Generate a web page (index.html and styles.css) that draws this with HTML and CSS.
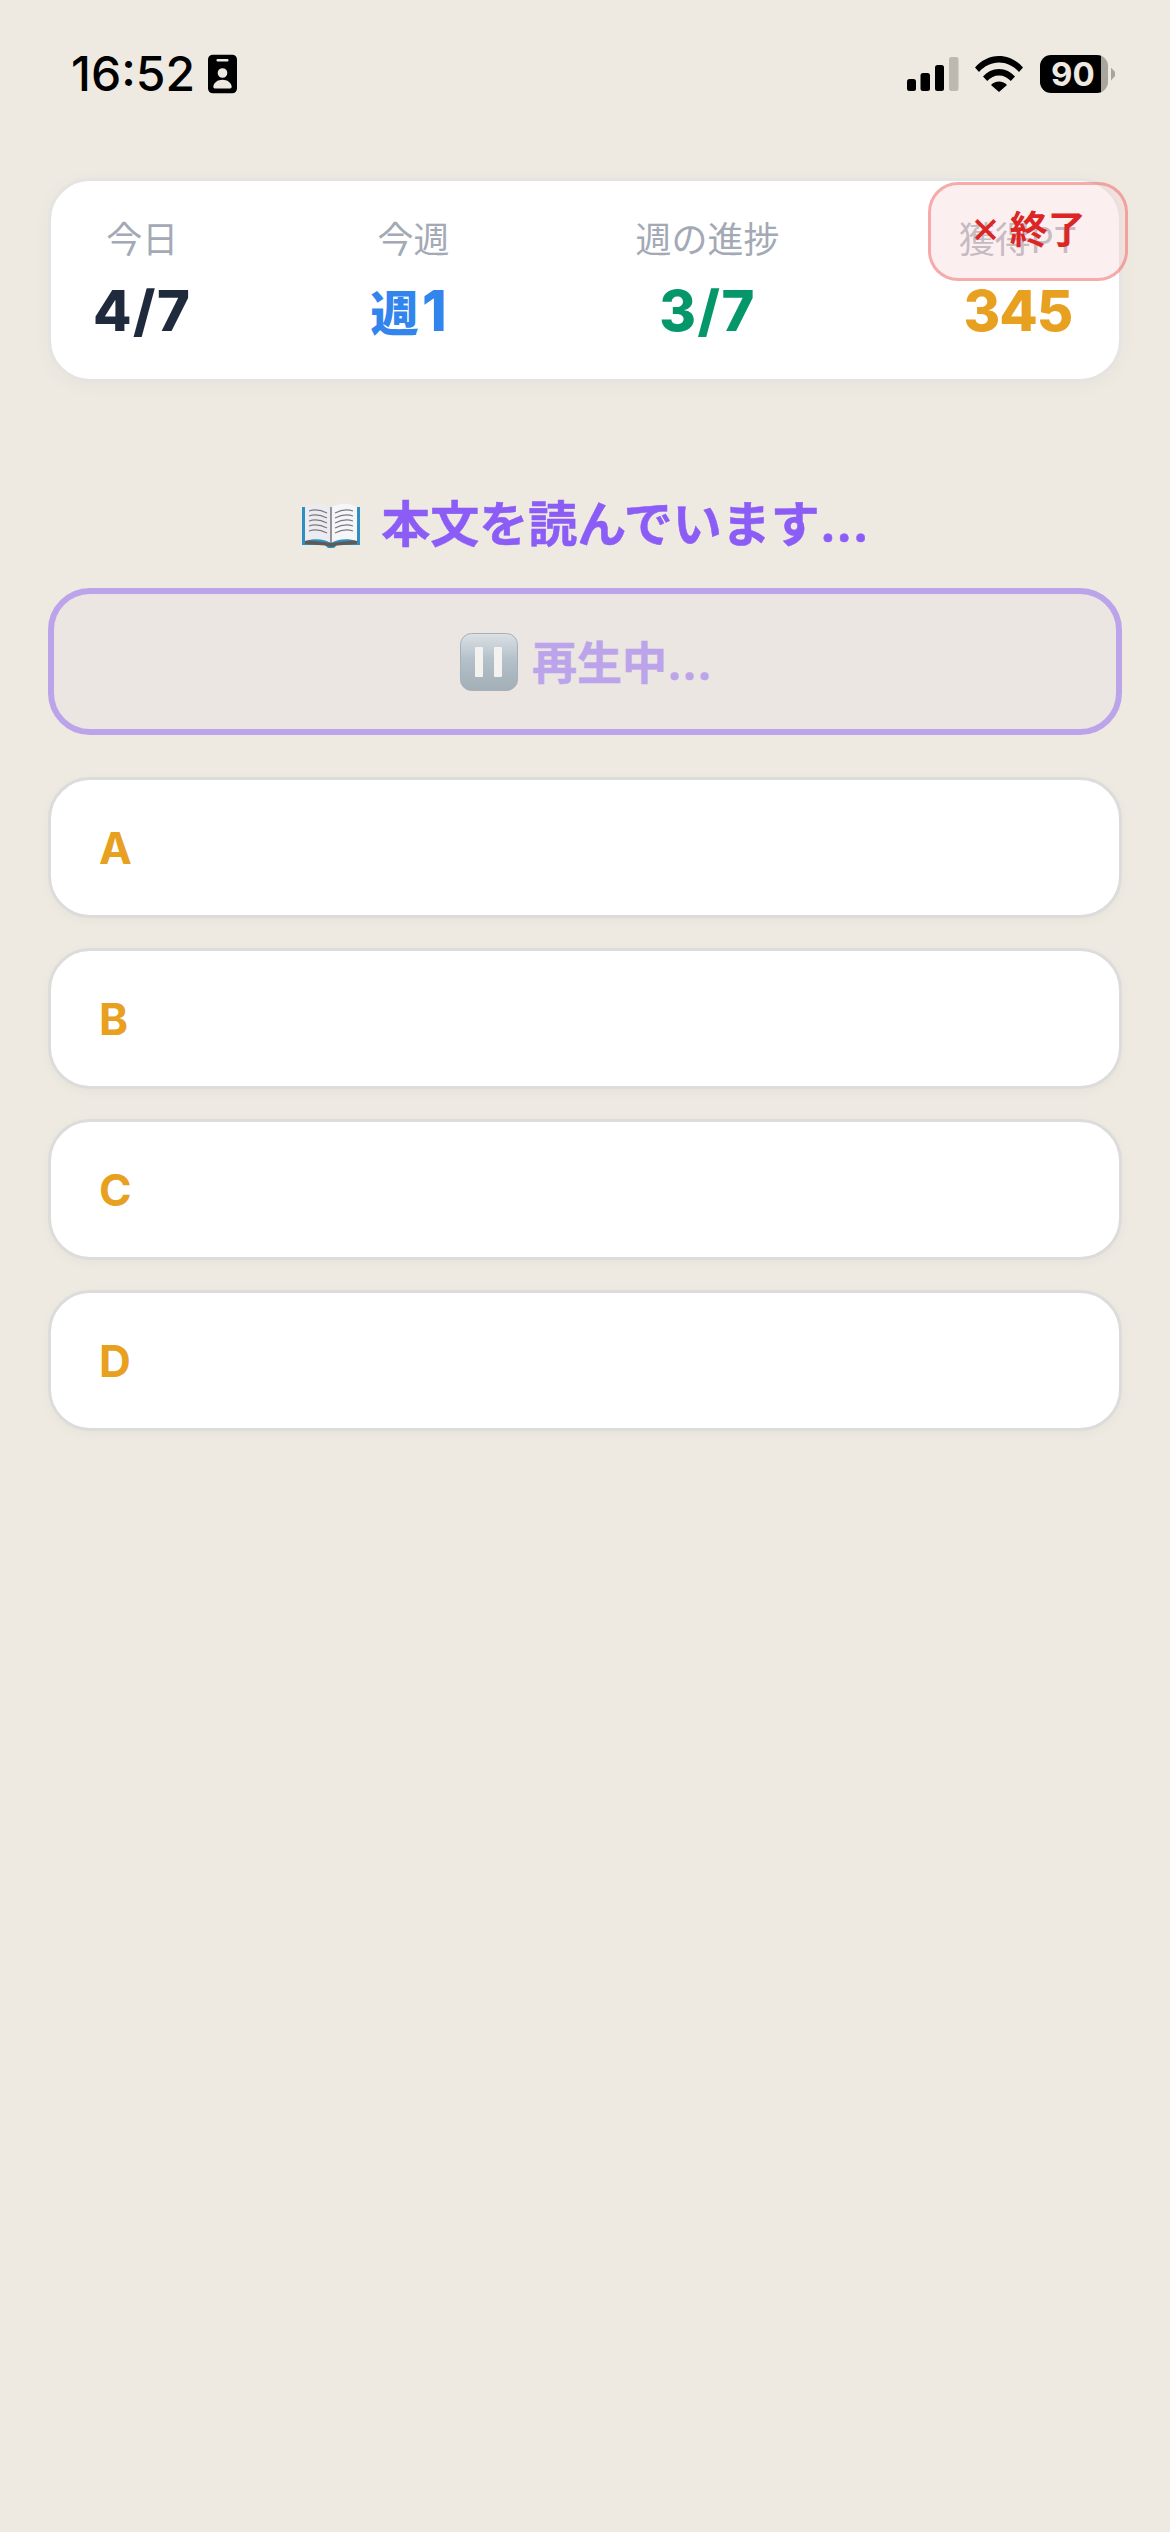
FILE: index.html
```html
<!DOCTYPE html>
<html lang="ja">
<head>
<meta charset="utf-8">
<title>本文を読んでいます</title>
<link rel="stylesheet" href="styles.css">
</head>
<body>
<header class="status">
  <div class="status-left">
    <span class="time">16:52</span>
    <svg class="badge" viewBox="0 0 30 40" aria-hidden="true">
      <path fill-rule="evenodd" d="M5 0H25a5 5 0 0 1 5 5V35a5 5 0 0 1-5 5H5a5 5 0 0 1-5-5V5a5 5 0 0 1 5-5ZM10 4.500a1 1 0 0 0 0 2.500H20a1 1 0 0 0 0-2.500ZM15 14a5 5 0 1 0 0 10 5 5 0 0 0 0-10ZM15 26c-5 0-9 3-9.500 7-.1 1 .5 2 1.500 2H23c1 0 1.600-1 1.500-2-.5-4-4.500-7-9.500-7Z"/>
    </svg>
  </div>
  <div class="status-right">
    <svg class="signal" viewBox="0 0 52 34" aria-hidden="true">
      <rect x="0" y="22" width="9" height="12" rx="2.500"/>
      <rect x="13.500" y="16" width="9.500" height="18" rx="2.500"/>
      <rect x="28" y="8" width="9" height="26" rx="2.500"/>
      <rect class="signal-off" x="42" y="0" width="9.500" height="34" rx="2.500"/>
    </svg>
    <svg class="wifi" viewBox="0 0 48 36" aria-hidden="true">
      <path d="M0 11.500C6 4.500 14.500 0 24 0s18 4.500 24 11.500l-4 4.500C38.500 10 31.500 6.500 24 6.500S9.500 10 4 16Z"/>
      <path d="M8 20.500C12 16 17.500 13 24 13s12 3 16 7.500l-4.200 4.500C32.500 21.500 28.500 19.500 24 19.500s-8.500 2-11.800 5.500Z"/>
      <path d="M16 29c2-2.300 4.800-3.500 8-3.500s6 1.200 8 3.500l-8 7Z"/>
    </svg>
    <div class="battery">
      <div class="battery-body"><span class="battery-num">90</span></div>
      <span class="battery-nub"></span>
    </div>
  </div>
</header>

<main class="page">
  <section class="stats">
    <div class="stat"><span class="stat-label">今日</span><span class="stat-value v-dark">4/7</span></div>
    <div class="stat"><span class="stat-label">今週</span><span class="stat-value v-blue"><span class="week-kanji">週</span>1</span></div>
    <div class="stat"><span class="stat-label">週の進捗</span><span class="stat-value v-green">3/7</span></div>
    <div class="stat"><span class="stat-label">獲得PT</span><span class="stat-value v-amber">345</span></div>
    <button class="quit" type="button"><span class="quit-x">×</span> 終了</button>
  </section>

  <h1 class="title">
    <svg class="book" viewBox="0 0 60 48" aria-hidden="true">
      <path fill="#2f8fc0" d="M1 6h58v38H36l-3 3h-6l-3-3H1Z"/>
      <path fill="#5f5a56" d="M4 39 30 42 56 39V43L36 44.500 30 46 24 44.500 4 43Z"/>
      <path fill="#ecebf0" d="M4 6C13 1 24 2 30 7V42C24 38 13 37 4 40Z"/>
      <path fill="#f6f5f8" d="M56 6C47 1 36 2 30 7V42C36 38 47 37 56 40Z"/>
      <path fill="none" stroke="#7b7a82" stroke-width="1.200" d="M8 10c6-2 12-1 18 2M8 15c6-2 12-1 18 2M8 20c6-2 12-1 18 2M8 25c6-2 12-1 18 2M8 30c6-2 12-1 18 2M34 12c6-3 12-4 18-2M34 17c6-3 12-4 18-2M34 22c6-3 12-4 18-2M34 27c6-3 12-4 18-2M34 32c6-3 12-4 18-2"/>
      <path fill="none" stroke="#77757c" stroke-width="1.500" d="M30 7V42"/>
    </svg>
    <span class="title-text">本文を読んでいます...</span>
  </h1>

  <button class="play" type="button">
    <svg class="pause" viewBox="0 0 58 58" aria-hidden="true">
      <defs>
        <linearGradient id="pg" x1="0" y1="0" x2="0" y2="1">
          <stop offset="0" stop-color="#dbe1e5"/>
          <stop offset=".45" stop-color="#b4c1ca"/>
          <stop offset="1" stop-color="#a3aeb6"/>
        </linearGradient>
      </defs>
      <rect x="0.500" y="0.500" width="57" height="57" rx="11" fill="url(#pg)" stroke="#a5b0b8"/>
      <rect x="15" y="14" width="8" height="30" rx="1" fill="#f4f2ef"/>
      <rect x="34" y="14" width="8" height="30" rx="1" fill="#f4f2ef"/>
    </svg>
    <span class="play-text">再生中...</span>
  </button>

  <ul class="options">
    <li class="option">A</li>
    <li class="option">B</li>
    <li class="option">C</li>
    <li class="option">D</li>
  </ul>
</main>
</body>
</html>
```
FILE: styles.css
```css
* { box-sizing: border-box; }
html, body { margin: 0; padding: 0; }
body {
  width: 1170px;
  height: 2532px;
  overflow: hidden;
  background: #eeeae2;
  font-family: Inter, "Noto Sans CJK JP", sans-serif;
  color: #000;
}
.status {
  display: flex;
  justify-content: space-between;
  align-items: center;
  height: 148px;
  padding: 0 55px 0 71px;
}
.status-left { display: flex; align-items: center; gap: 13px; }
.time { font-size: 48px; font-weight: 500; line-height: 1; letter-spacing: 0; }
.badge { width: 29px; height: 40px; display: block; }
.status-right { display: flex; align-items: center; }
.signal { width: 52px; height: 34px; display: block; margin-right: 16px; }
.signal-off { fill: #bdb9b1; }
.wifi { width: 48px; height: 36px; display: block; margin-right: 17px; }
.battery { display: flex; align-items: center; gap: 3px; }
.battery-body {
  width: 68px;
  height: 38px;
  border-radius: 11px;
  background: linear-gradient(90deg, #000 0, #000 90%, #a8a59d 90%);
  display: flex;
  align-items: center;
  padding-left: 11px;
}
.battery-num { color: #eeeae2; font-size: 33px; font-weight: 700; line-height: 1; }
.battery-nub {
  width: 4px;
  height: 13px;
  background: #a8a59d;
  clip-path: polygon(0 0, 100% 35%, 100% 65%, 0 100%);
}
.page { padding: 0 48px; }
.stats {
  position: relative;
  height: 204px;
  margin-top: 30px;
  background: #fff;
  border: 3px solid #e4e4e2;
  border-radius: 42px;
  box-shadow: 0 4px 20px rgba(0, 0, 0, .03);
  display: flex;
  justify-content: space-between;
  padding: 37px 42px 0 42px;
}
.stat { display: flex; flex-direction: column; align-items: center; gap: 15px; }
.stat-label { font-size: 36px; line-height: 44px; color: #a3a9b5; font-weight: 400; }
.stat-value { font-size: 56px; line-height: 68px; font-weight: 800; letter-spacing: 1.500px; }
.week-kanji { font-size: 48px; margin-right: 2px; }
.v-dark { color: #1f2a3c; }
.v-blue { color: #3385ee; margin-right: 8px; }
.v-green { color: #059669; }
.v-amber { color: #e8a020; letter-spacing: -1px; }
.quit {
  position: absolute;
  top: 1px;
  right: -9px;
  width: 200px;
  height: 99px;
  border: 3px solid rgba(239, 68, 68, .4);
  border-radius: 30px;
  background: rgba(248, 215, 215, .4);
  color: #dc2626;
  font-family: inherit;
  font-size: 38px;
  font-weight: 700;
  padding: 0 0 10px;
}
.quit-x { font-size: 46px; font-weight: 400; line-height: 1; }
.title {
  display: flex;
  justify-content: center;
  align-items: center;
  gap: 20px;
  height: 60px;
  margin: 113px 0 0;
  color: #8b5cf6;
  font-size: 49px;
  font-weight: 700;
  line-height: 60px;
}
.title-text { -webkit-text-stroke: .5px #8b5cf6; }
.book { width: 60px; height: 48px; display: block; }
.play {
  display: flex;
  justify-content: center;
  align-items: center;
  gap: 14px;
  width: 100%;
  height: 147px;
  margin-top: 33px;
  border: 6px solid #bca4ea;
  border-radius: 42px;
  background: #ebe6e2;
  color: #bca4ea;
  font-family: inherit;
  font-size: 45px;
  font-weight: 700;
  padding: 0 0 0 2px;
}
.play-text { position: relative; top: -1px; -webkit-text-stroke: .5px #bca4ea; }
.pause { width: 58px; height: 58px; display: block; }
.options {
  list-style: none;
  margin: 42px 0 0;
  padding: 0;
  display: flex;
  flex-direction: column;
  gap: 30px;
}
.option {
  height: 141px;
  background: #fff;
  border: 3px solid #dcdcdb;
  border-radius: 42px;
  box-shadow: 0 3px 12px rgba(0, 0, 0, .03);
  color: #e8a020;
  font-size: 44px;
  font-weight: 700;
  display: flex;
  align-items: center;
  padding-left: 48px;
}
```
